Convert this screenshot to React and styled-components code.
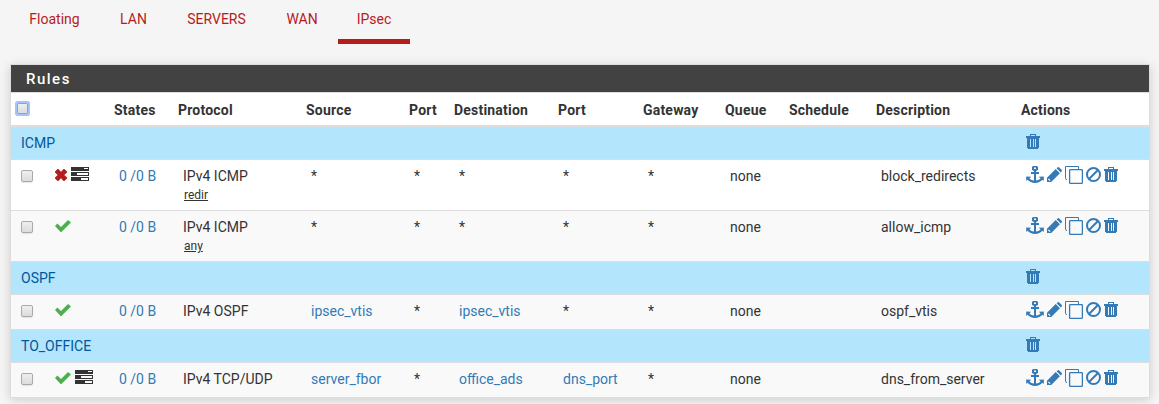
import React from 'react';
import styled, { createGlobalStyle, css } from 'styled-components';

const Global = createGlobalStyle`
  * { box-sizing: border-box; }
  body {
    margin: 0;
    background: #f5f5f5;
    color: #333;
    font: 400 14px/20px Roboto, "Liberation Sans", sans-serif;
    overflow: hidden;
  }
`;

const Page = styled.main`
  height: 404px;
  padding: 0 9px 0 10px;
`;

const Tabs = styled.nav`
  display: flex;
  height: 44px;
  margin-left: -1px;
`;

const Tab = styled.a`
  width: ${(p) => p.$width}px;
  padding-top: 9px;
  text-align: center;
  color: #b71c1c;
  border-bottom: 5px solid ${(p) => (p.$active ? '#b71c1c' : 'transparent')};
`;

const Panel = styled.section`
  margin-top: 20px;
  background: #fff;
  border: 1px solid #ddd;
  box-shadow: 0 2px 10px rgba(0, 0, 0, 0.16);
`;

const PanelTitle = styled.h2`
  margin: 0;
  height: 28px;
  padding: 4px 15px;
  background: #424242;
  border-bottom: 1px solid #ddd;
  color: #fff;
  font-size: 15px;
  font-weight: 500;
  line-height: 20px;
  letter-spacing: 1.5px;
`;

const Table = styled.table`
  width: 100%;
  table-layout: fixed;
  border-collapse: separate;
  border-spacing: 0;
`;

const Col = styled.col`
  width: ${(p) => p.$width}px;
`;

const HeadCell = styled.th`
  height: 34px;
  padding: 7px 0 0 5px;
  border-bottom: 2px solid #ddd;
  text-align: left;
  vertical-align: top;
  font-weight: 700;
  white-space: nowrap;
  letter-spacing: 0.2px;
`;

const Cell = styled.td`
  padding: 6px 0 0 10px;
  border-top: 1px solid #ddd;
  vertical-align: top;
  white-space: nowrap;
`;

const RuleRow = styled.tr`
  height: ${(p) => (p.$tall ? 51 : 35)}px;
  background: ${(p) => (p.$striped ? '#f9f9f9' : '#fff')};
`;

const GroupRow = styled.tr`
  height: ${(p) => (p.$first ? 32 : 33)}px;
  background: #b3e5fc;
  color: #01579b;

  ${(p) => p.$first && css`
    ${Cell} { border-top: 0; }
  `}
`;

const Link = styled.a`
  color: #337ab7;
`;

const Subtype = styled.div`
  padding: 1px 0 0 1px;
  font-size: 12px;
  line-height: 16px;
  text-decoration: underline;
`;

const Check = styled.input`
  appearance: none;
  display: block;
  width: 12px;
  height: 12px;
  margin: 4px 0 0;
  border: 1px solid #aaa;
  border-radius: 2px;
  background: linear-gradient(#eee, #dcdcdc);
  box-shadow: 0 1px 1px rgba(0, 0, 0, 0.1);

  ${(p) => p.$focused && css`
    width: 11px;
    height: 11px;
    margin: 3px 0 0 1px;
    border-color: #93a3bd;
    border-radius: 1px;
    box-shadow: 0 0 0 2px #a3c3fb;
  `}
`;

const Status = styled.div`
  display: flex;
  align-items: flex-start;
  gap: 4px;
  padding: 1px 0 0 1px;
`;

const Actions = styled.div`
  display: flex;
  align-items: flex-start;
  color: #337ab7;
  gap: 3px;
`;

const Glyph = styled.svg`
  display: block;
  flex: none;
  margin-top: ${(p) => p.$drop || 0}px;
  fill: currentColor;
`;

const Pass = styled(Glyph)`
  color: #4caf50;
`;

const Block = styled(Glyph)`
  color: #b71c1c;
`;

const PassIcon = () => (
  <Pass width="16" height="12" viewBox="0 0 16 12" $drop={2}>
    <path d="M0 6L2.4 3.6 6 6.9 13 0 16 2.6 6.4 12H5.6z" />
  </Pass>
);

const BlockIcon = () => (
  <Block width="12" height="12" viewBox="0 0 12 12" $drop={2}>
    <path d="M0 2.6L2.6 0H3.4L6 2.7 8.6 0H9.4L12 2.6V3.4L9.3 6 12 8.6V9.4L9.4 12H8.6L6 9.3 3.4 12H2.6L0 9.4V8.6L2.7 6 0 3.4z" />
  </Block>
);

const TasksIcon = () => (
  <Glyph width="18" height="14" viewBox="0 0 18 14" shapeRendering="crispEdges">
    <path fillRule="evenodd" d="M0 0H18V4H0zM13 1V2H17V1zM0 5H18V9H0zM6 6V8H17V6zM0 10H18V14H0zM10 11V13H17V11z" />
  </Glyph>
);

const AnchorIcon = () => (
  <Glyph width="18" height="17" viewBox="0 0 18 17">
    <path fillRule="evenodd" d="M7 0H11L12 1V4L10 5V6H13V8H10V14.5C12.4 14.2 14 13.2 14.6 12.2L13 11V10.7L17.8 10.5V15L16.4 13.8C14.8 15.8 12 17 9 17S3.2 15.8 1.6 13.8L.2 15V10.5L5 10.7V11L3.4 12.2C4 13.2 5.6 14.2 8 14.5V8H5V6H8V5L6 4V1zM8 1.5V3H10V1.5z" />
  </Glyph>
);

const PencilIcon = () => (
  <Glyph width="15" height="15" viewBox="0 0 15 15" $drop={1}>
    <path fillRule="evenodd" d="M0 15V10.8L8.7 2.1 12.9 6.3 4.2 15zM1.8 11.4L1.2 12V13H2V13.8H3L3.6 13.2zM9.6 1.2L10.4 .4Q11.3-.3 12.2 .4L14.6 2.8Q15.3 3.7 14.6 4.6L13.8 5.4z" />
  </Glyph>
);

const CloneIcon = () => (
  <Glyph width="18" height="18" viewBox="0 0 18 18">
    <path fill="none" stroke="currentColor" d="M13.5 3V.5H.5V12.5Q.5 13.5 2 13.5" />
    <rect x="4.6" y="3.6" width="12.8" height="13.8" rx=".8" fill="none" stroke="currentColor" strokeWidth="1.3" />
  </Glyph>
);

const BanIcon = () => (
  <Glyph width="15" height="15" viewBox="0 0 15 15" $drop={1}>
    <circle cx="7.5" cy="7.5" r="6.5" fill="none" stroke="currentColor" strokeWidth="2" />
    <path d="M3 12L12 3" stroke="currentColor" strokeWidth="2" />
  </Glyph>
);

const TrashIcon = () => (
  <Glyph width="14" height="15" viewBox="0 0 14 15" $drop={1} shapeRendering="crispEdges">
    <path fillRule="evenodd" d="M4 0H10V2H14V4H13V14H12V15H2V14H1V4H0V2H4zM5 1V2H9V1zM4 5V13H5V5zM7 5V13H8V5zM9 5V13H10V5z" />
  </Glyph>
);

const tabs = [
  { label: 'Floating', width: 91 },
  { label: 'LAN', width: 67 },
  { label: 'SERVERS', width: 99 },
  { label: 'WAN', width: 72 },
  { label: 'IPsec', width: 72, active: true },
];

const columns = [
  ['', 33], ['', 65], ['States', 64], ['Protocol', 128], ['Source', 103], ['Port', 45],
  ['Destination', 104], ['Port', 85], ['Gateway', 82], ['Queue', 64], ['Schedule', 87],
  ['Description', 145], ['Actions', 133],
];

const groups = [
  {
    name: 'ICMP',
    rules: [
      { block: true, tasks: true, protocol: 'IPv4 ICMP', subtype: 'redir', description: 'block_redirects' },
      { protocol: 'IPv4 ICMP', subtype: 'any', description: 'allow_icmp', striped: true },
    ],
  },
  {
    name: 'OSPF',
    rules: [
      { protocol: 'IPv4 OSPF', source: 'ipsec_vtis', destination: 'ipsec_vtis', description: 'ospf_vtis', striped: true },
    ],
  },
  {
    name: 'TO_OFFICE',
    rules: [
      { tasks: true, protocol: 'IPv4 TCP/UDP', source: 'server_fbor', destination: 'office_ads', destPort: 'dns_port', description: 'dns_from_server', striped: true },
    ],
  },
];

const Alias = ({ name }) => (name ? <Link>{name}</Link> : '*');

function Rule({ rule }) {
  return (
    <RuleRow $tall={!!rule.subtype} $striped={rule.striped}>
      <Cell><Check type="checkbox" /></Cell>
      <Cell>
        <Status>
          {rule.block ? <BlockIcon /> : <PassIcon />}
          {rule.tasks && <TasksIcon />}
        </Status>
      </Cell>
      <Cell><Link>0 /0 B</Link></Cell>
      <Cell>
        {rule.protocol}
        {rule.subtype && <Subtype>{rule.subtype}</Subtype>}
      </Cell>
      <Cell><Alias name={rule.source} /></Cell>
      <Cell>*</Cell>
      <Cell><Alias name={rule.destination} /></Cell>
      <Cell><Alias name={rule.destPort} /></Cell>
      <Cell>*</Cell>
      <Cell>none</Cell>
      <Cell />
      <Cell>{rule.description}</Cell>
      <Cell>
        <Actions>
          <AnchorIcon />
          <PencilIcon />
          <CloneIcon />
          <BanIcon />
          <TrashIcon />
        </Actions>
      </Cell>
    </RuleRow>
  );
}

export default function App() {
  return (
    <Page>
      <Global />
      <Tabs>
        {tabs.map((t) => (
          <Tab key={t.label} $width={t.width} $active={t.active}>{t.label}</Tab>
        ))}
      </Tabs>
      <Panel>
        <PanelTitle>Rules</PanelTitle>
        <Table>
          <colgroup>
            {columns.map(([, width], i) => <Col key={i} $width={width} />)}
          </colgroup>
          <thead>
            <tr>
              {columns.map(([label], i) => (
                <HeadCell key={i}>{i === 0 ? <Check type="checkbox" $focused /> : label}</HeadCell>
              ))}
            </tr>
          </thead>
          <tbody>
            {groups.map((group, i) => (
              <React.Fragment key={group.name}>
                <GroupRow $first={i === 0}>
                  <Cell colSpan={12}>{group.name}</Cell>
                  <Cell><Actions><TrashIcon /></Actions></Cell>
                </GroupRow>
                {group.rules.map((rule) => <Rule key={rule.description} rule={rule} />)}
              </React.Fragment>
            ))}
          </tbody>
        </Table>
      </Panel>
    </Page>
  );
}
